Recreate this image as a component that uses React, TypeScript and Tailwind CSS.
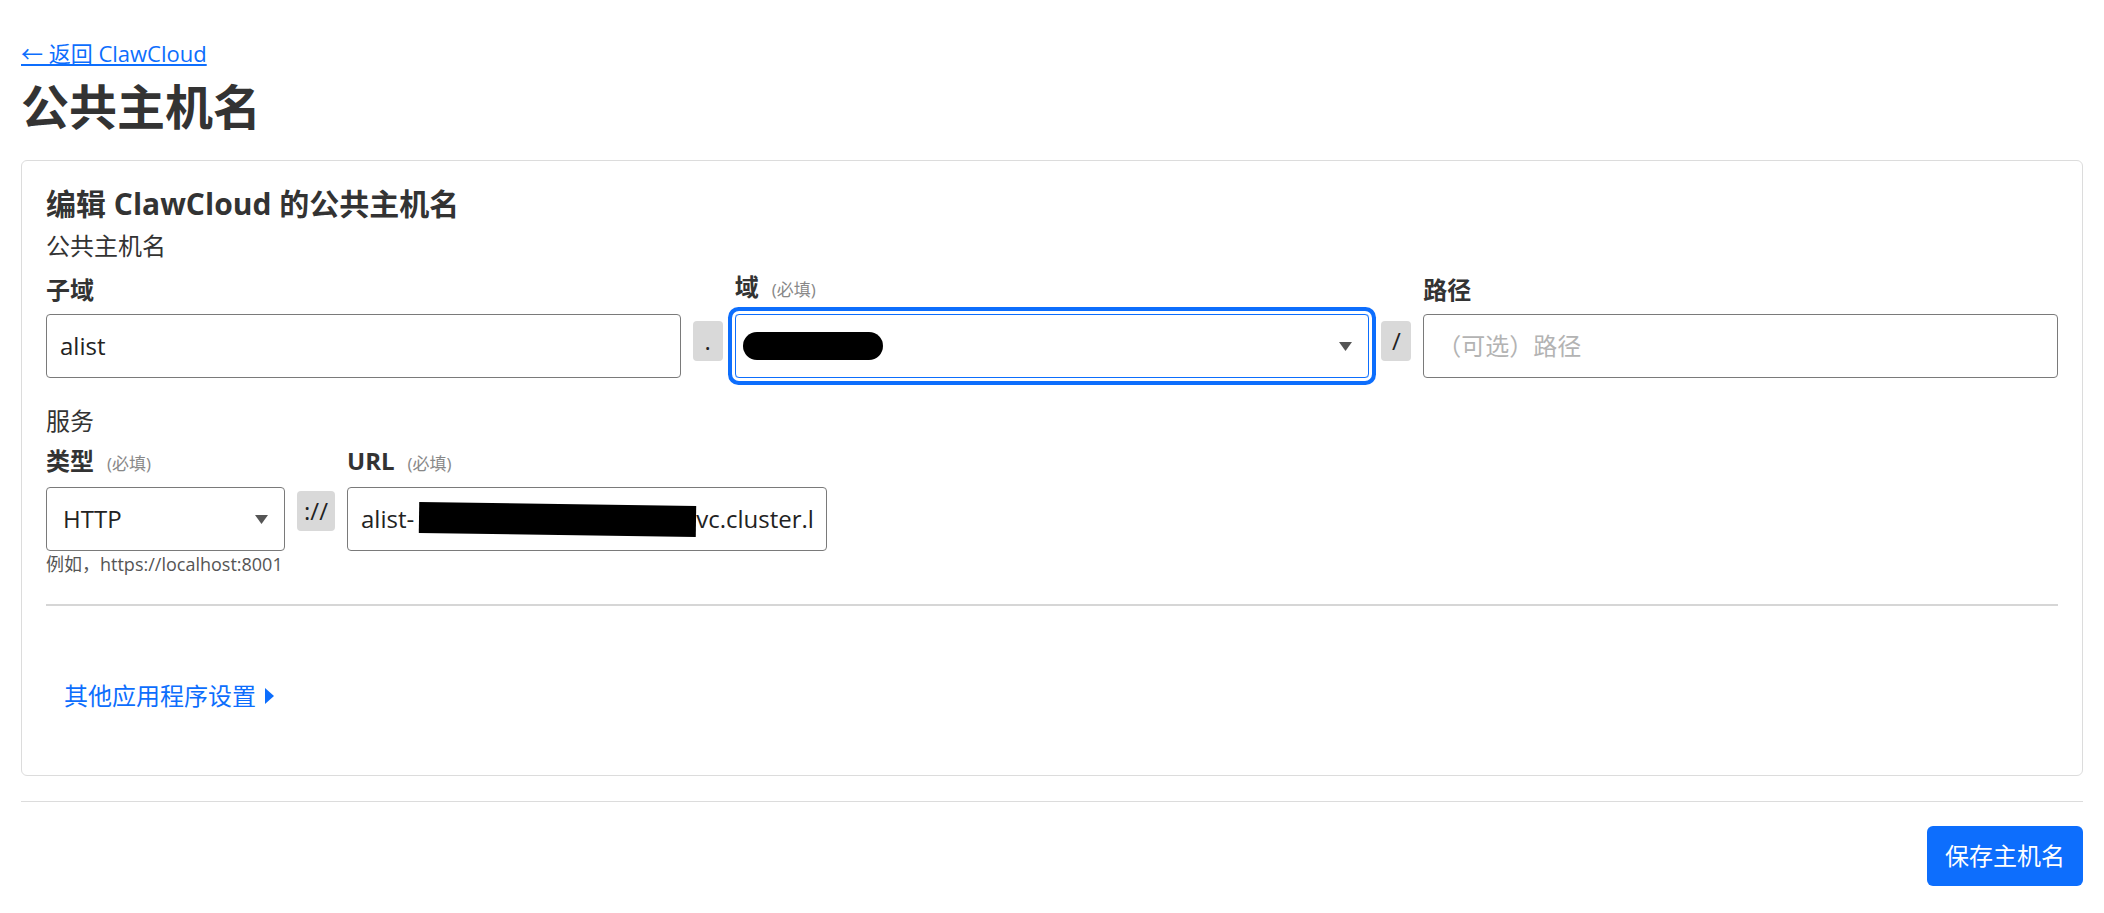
import type { ReactNode } from 'react';

function Label({ children, required }: { children: ReactNode; required?: boolean }) {
  return (
    <div className="flex items-baseline text-[24px] font-bold leading-[36px] text-[#333]">
      <span>{children}</span>
      {required && <span className="ml-[13px] text-[17px] font-normal text-[#888]">(必填)</span>}
    </div>
  );
}

function Addon({ children, w }: { children: ReactNode; w: string }) {
  return (
    <div className={`mb-[17px] flex h-[40px] ${w} shrink-0 items-center justify-center rounded-[4px] bg-[#d9d9d9] text-[24px] text-[#222]`}>
      {children}
    </div>
  );
}

function Caret() {
  return (
    <svg width="13" height="9" viewBox="0 0 13 9" className="shrink-0">
      <path d="M0 0h13L6.5 9z" fill="#555" />
    </svg>
  );
}

export default function App() {
  return (
    <div className="min-h-screen bg-white px-[21px] pt-[37px] font-['Open_Sans','Noto_Sans_CJK_SC',sans-serif] text-[#333]">
      <div>
        <a href="#" className="text-[22px] leading-[33px] text-[#0d6efd] underline">
          ← 返回 ClawCloud
        </a>
      </div>
      <h1 className="mt-[8px] text-[48px] font-bold leading-[58px] text-[#333]">公共主机名</h1>

      <div className="mt-[24px] rounded-[6px] border border-[#dcdcdc] px-[24px] pt-[25px] pb-[61px]">
        <h2 className="text-[30px] font-bold leading-[36px]">编辑 ClawCloud 的公共主机名</h2>
        <div className="mt-[6px] text-[24px] leading-[36px]">公共主机名</div>

        {/* hostname row */}
        <div className="mt-[5px] flex items-end gap-[12px]">
          <div className="flex-1">
            <Label>子域</Label>
            <div className="mt-[6px] flex h-[64px] items-center rounded-[4px] border border-[#7a7a7a] px-[13px] text-[24px] text-[#222]">
              alist
            </div>
          </div>
          <Addon w="w-[30px]">.</Addon>
          <div className="flex-1">
            <Label required>域</Label>
            <div className="mt-[6px] flex h-[64px] items-center justify-between rounded-[4px] border border-[#0d6efd] pr-[16px] pl-[7px] ring-4 ring-[#0d6efd] ring-offset-[3px]">
              <div className="h-[28px] w-[140px] rounded-full bg-black" />
              <Caret />
            </div>
          </div>
          <Addon w="w-[30px]">/</Addon>
          <div className="flex-1">
            <Label>路径</Label>
            <div className="mt-[6px] flex h-[64px] items-center rounded-[4px] border border-[#7a7a7a] px-[13px] text-[24px] text-[#b3b3b3]">
              （可选）路径
            </div>
          </div>
        </div>

        {/* service */}
        <div className="mt-[25px] text-[24px] leading-[36px]">服务</div>
        <div className="mt-[4px] flex items-start gap-[12px]">
          <div className="w-[239px]">
            <Label required>类型</Label>
            <div className="mt-[5px] flex h-[64px] items-center justify-between rounded-[4px] border border-[#7a7a7a] pr-[16px] pl-[16px] text-[24px] text-[#222]">
              HTTP
              <Caret />
            </div>
            <div className="mt-[1px] whitespace-nowrap text-[18px] leading-[24px] text-[#555]">例如，https://localhost:8001</div>
          </div>
          <div className="mt-[48px] flex h-[40px] w-[38px] shrink-0 items-center justify-center rounded-[4px] bg-[#d9d9d9] text-[24px] text-[#222]">
            ://
          </div>
          <div className="w-[480px]">
            <Label required>URL</Label>
            <div className="mt-[5px] flex h-[64px] items-center rounded-[4px] border border-[#7a7a7a] px-[13px] text-[24px] text-[#222]">
              <span>alist-</span>
              <span className="ml-[5px] inline-block h-[31px] w-[277px] shrink-0 rotate-[0.8deg] bg-black" />
              <span className="whitespace-nowrap">vc.cluster.l</span>
            </div>
          </div>
        </div>

        <div className="mt-[28px] h-[2px] bg-[#d6d6d6]" />

        <div className="mt-[72px] flex items-center pl-[18px] text-[24px] leading-[36px] text-[#0d6efd]">
          其他应用程序设置
          <svg width="9" height="16" viewBox="0 0 9 16" className="ml-[9px]">
            <path d="M0 0l9 8-9 8z" fill="#0d6efd" />
          </svg>
        </div>
      </div>

      <div className="mt-[25px] h-px bg-[#dcdcdc]" />
      <div className="mt-[24px] flex justify-end">
        <button className="h-[60px] rounded-[6px] bg-[#0d6efd] px-[18px] text-[24px] text-white">保存主机名</button>
      </div>
    </div>
  );
}
